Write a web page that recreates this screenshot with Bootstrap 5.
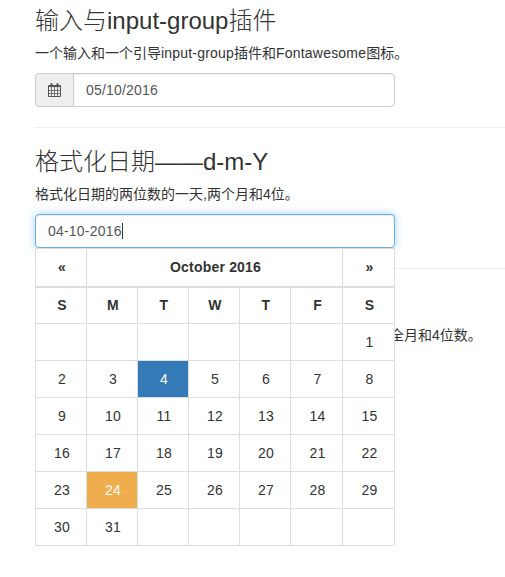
<!DOCTYPE html>
<html lang="zh-CN">
<head>
<meta charset="utf-8">
<title>Datepicker</title>
<link href="https://cdn.jsdelivr.net/npm/bootstrap@5.3.0/dist/css/bootstrap.min.css" rel="stylesheet">
<style>
  body { font: 14px/20px "Liberation Sans", "Noto Sans CJK SC", sans-serif; color: #333; }
  .demo { padding: 7px 0 0 35px; min-height: 577px; }
  .demo h3 { font-size: 24px; line-height: 23px; font-weight: 400; margin: 0 0 10px; height: 26px; white-space: nowrap; color: #333; }
  .demo h3 .cjk { font-family: "Noto Sans CJK SC Light", "Noto Sans CJK SC", sans-serif; font-weight: 300; }
  .demo p { margin: 0 0 10px; height: 20px; white-space: nowrap; }
  .demo p .latin { letter-spacing: .2px; }
  .demo p.tail { padding-left: 355px; }
  .demo hr { margin: 20px 0; border-top: 1px solid #eee; opacity: 1; }
  .field { width: 360px; height: 34px; }
  .field .form-control { height: 34px; font-size: 14px; line-height: 20px; letter-spacing: .2px; color: #555; padding: 6px 12px; border-color: #ccc; border-radius: 4px; box-shadow: inset 0 1px 1px rgba(0,0,0,.075); }
  .field .input-group-text { width: 39px; padding: 0 0 0 12px; background: #eee; border-color: #ccc; border-radius: 4px; }
  .field .form-control.active-field { border-color: #66afe9; box-shadow: inset 0 1px 1px rgba(0,0,0,.075), 0 0 8px rgba(102,175,233,.6); }
  .caret { width: 1px; height: 16px; background: #333; left: 87px; top: 9px; }
  .calendar { top: 34px; left: 0; width: 360px; z-index: 10; }
  .calendar table { width: 360px; table-layout: fixed; border-collapse: collapse; background: #fff; color: #333; }
  .calendar .table > * > tr > * { height: 37px; padding: 0 0 0 2px; border: 1px solid #ddd; line-height: 20px; letter-spacing: .2px; color: #333; vertical-align: middle; }
  .calendar .table > thead > tr.month > * { border-bottom-width: 2px; height: 38px; }
  .calendar .table > tbody > tr > td.chosen { background: #337ab7; color: #fff; box-shadow: none; }
  .calendar .table > tbody > tr > td.today { background: #f0ad4e; color: #fff; box-shadow: none; }
</style>
<script src="https://cdn.jsdelivr.net/npm/bootstrap@5.3.0/dist/js/bootstrap.bundle.min.js"></script>
</head>
<body>
<main class="demo">
  <section>
    <h3><span class="cjk">输入与</span>input-group<span class="cjk">插件</span></h3>
    <p>一个输入和一个引导<span class="latin">input-group</span>插件和<span class="latin">Fontawesome</span>图标。</p>
    <div class="input-group field flex-nowrap">
      <span class="input-group-text">
        <svg width="14" height="14" viewBox="0 0 14 14" fill="none" stroke="#555">
          <path d="M.5 2.500h12v11H.5z"/>
          <path d="M.5 3.500h12"/>
          <path d="M3.500 4v9.500M6.500 4v9.500M9.500 4v9.500M1 7.500h11.500M1 10.500h11.500" stroke-width=".8"/>
          <path d="M3.500.300v3M9.500.300v3" stroke-width="2"/>
        </svg>
      </span>
      <input class="form-control" type="text" value="05/10/2016">
    </div>
  </section>
  <hr>
  <section>
    <h3><span class="cjk">格式化日期</span>——d-m-Y</h3>
    <p>格式化日期的两位数的一天,两个月和4位。</p>
    <div class="field position-relative">
      <input class="form-control active-field" type="text" value="04-10-2016">
      <span class="caret position-absolute"></span>
      <div class="calendar position-absolute">
        <table class="table table-bordered text-center align-middle mb-0">
          <colgroup><col style="width:51px"><col style="width:51px"><col style="width:51px"><col style="width:51px"><col style="width:51px"><col style="width:52px"><col style="width:52px"></colgroup>
          <thead>
            <tr class="month"><th>«</th><th colspan="5">October 2016</th><th>»</th></tr>
            <tr><th>S</th><th>M</th><th>T</th><th>W</th><th>T</th><th>F</th><th>S</th></tr>
          </thead>
          <tbody>
            <tr><td></td><td></td><td></td><td></td><td></td><td></td><td>1</td></tr>
            <tr><td>2</td><td>3</td><td class="chosen">4</td><td>5</td><td>6</td><td>7</td><td>8</td></tr>
            <tr><td>9</td><td>10</td><td>11</td><td>12</td><td>13</td><td>14</td><td>15</td></tr>
            <tr><td>16</td><td>17</td><td>18</td><td>19</td><td>20</td><td>21</td><td>22</td></tr>
            <tr><td>23</td><td class="today">24</td><td>25</td><td>26</td><td>27</td><td>28</td><td>29</td></tr>
            <tr><td>30</td><td>31</td><td></td><td></td><td></td><td></td><td></td></tr>
          </tbody>
        </table>
      </div>
    </div>
  </section>
  <hr>
  <section>
    <h3></h3>
    <p class="tail">全月和4位数。</p>
  </section>
</main>
</body>
</html>
